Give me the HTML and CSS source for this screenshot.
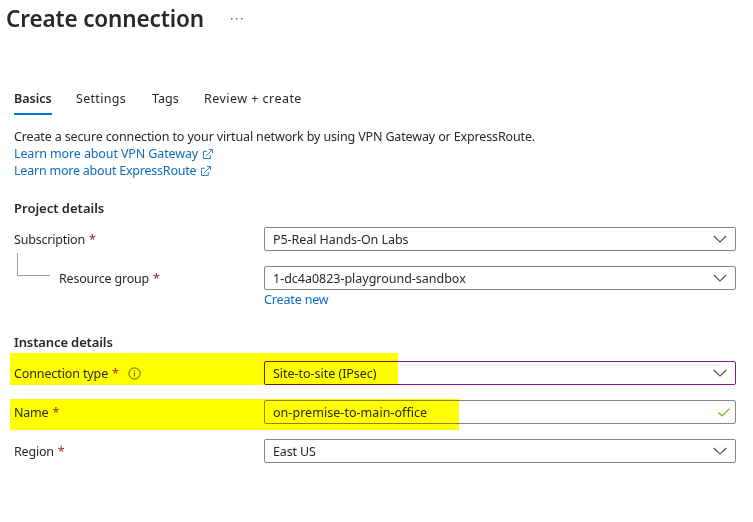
FILE: index.html
```html
<!DOCTYPE html>
<html lang="en">
<head>
<meta charset="utf-8">
<title>Create connection</title>
<link rel="stylesheet" href="styles.css">
</head>
<body>
<svg class="defs" width="0" height="0">
  <symbol id="chevron" viewBox="0 0 14 8"><path d="M0.8 1 L7 7.100 L13.200 1"/></symbol>
  <symbol id="external" viewBox="0 0 11 11"><path d="M4.500 2.500H.5v8h7.500V6.500M3.500 7.500 10 1M6.500 .5h4v4"/></symbol>
</svg>
<header class="header">
  <h1 class="title">Create connection</h1>
  <svg class="more" width="12" height="2" viewBox="0 0 12 2"><path d="M0 0h1.400v1.400H0zM5 0h1.400v1.400H5zM10 0h1.400v1.400H10z"/></svg>
</header>
<nav class="tabs">
  <a class="tab active"><span>Basics</span></a>
  <a class="tab settings">Settings</a>
  <a class="tab tags">Tags</a>
  <a class="tab review">Review + create</a>
</nav>
<main class="content">
  <div class="intro">
    <p class="desc">Create a secure connection to your virtual network by using VPN Gateway or ExpressRoute.</p>
    <a class="link"><span class="vpn">Learn more about VPN Gateway</span><svg class="ext"><use href="#external"/></svg></a>
    <a class="link"><span class="route">Learn more about ExpressRoute</span><svg class="ext"><use href="#external"/></svg></a>
  </div>
  <h2 class="section project">Project details</h2>
  <div class="row">
    <label class="label"><span class="l-sub">Subscription</span><b>*</b></label>
    <div class="field"><span class="v-sub">P5-Real Hands-On Labs</span><svg class="chev"><use href="#chevron"/></svg></div>
  </div>
  <div class="row">
    <label class="label child"><i class="branch"></i><span class="l-group">Resource group</span><b>*</b></label>
    <div class="field"><span class="v-group">1-dc4a0823-playground-sandbox</span><svg class="chev"><use href="#chevron"/></svg></div>
  </div>
  <a class="link create"><span>Create new</span></a>
  <h2 class="section instance">Instance details</h2>
  <div class="row">
    <label class="label"><span class="l-type">Connection type</span><b>*</b>
      <svg class="info" width="13" height="13" viewBox="0 0 13 13"><circle cx="6.500" cy="6.500" r="5.600"/><path d="M6.500 5.500v4M6.500 3.300v1.100"/></svg>
    </label>
    <div class="field focused"><span class="v-type">Site-to-site (IPsec)</span><svg class="chev"><use href="#chevron"/></svg></div>
    <div class="mark mark-type"></div>
  </div>
  <div class="row">
    <label class="label"><span class="l-name">Name</span><b>*</b></label>
    <div class="field"><span class="v-name">on-premise-to-main-office</span><svg class="check" width="12" height="9" viewBox="0 0 12 9"><path d="M.5 4.500 4.200 8 11.500 .7"/></svg></div>
    <div class="mark mark-name"></div>
  </div>
  <div class="row">
    <label class="label"><span class="l-region">Region</span><b>*</b></label>
    <div class="field"><span class="v-region">East US</span><svg class="chev"><use href="#chevron"/></svg></div>
  </div>
</main>
</body>
</html>
```
FILE: styles.css
```css
* { box-sizing: border-box; }
body {
  margin: 0;
  background: #fff;
  color: #292827;
  font: 12.5px/17px "Noto Sans", "Open Sans", sans-serif;
}
h1, h2, p { margin: 0; }
span { white-space: nowrap; }
.defs { position: absolute; }
.header { display: flex; align-items: center; height: 38px; padding-left: 6px; }
.title { width: 224.5px; font-size: 22.5px; line-height: 38px; font-weight: 600; letter-spacing: -.14px; white-space: nowrap; }
.more { fill: #605e5c; }
.tabs { display: flex; height: 77px; padding: 50px 0 0 14px; }
.tab { height: 27px; line-height: 21px; white-space: nowrap; }
.tab.active { width: 38px; border-bottom: 2px solid #0078d4; font-weight: 600; }
.settings { width: 50px; margin-left: 24px; letter-spacing: .3px; }
.tags { width: 28px; margin-left: 26px; }
.review { margin-left: 24px; letter-spacing: .46px; }
.content { width: 736px; padding: 13px 0 0 14px; }
.desc { letter-spacing: -.14px; white-space: nowrap; }
.link { display: flex; align-items: center; height: 17px; color: #0f6cbd; }
.vpn { letter-spacing: -.12px; }
.route { letter-spacing: -.22px; }
.ext { width: 10px; height: 10px; margin-left: 5px; fill: none; stroke: #1673cc; stroke-width: 1; }
.section { font-size: 13px; line-height: 18px; font-weight: 600; }
.project { margin: 20px 0 10px; }
.instance { margin: 25px 0 10px; letter-spacing: -.12px; }
.row { position: relative; display: grid; grid-template-columns: 250px 1fr; height: 24px; margin-bottom: 15px; }
.label { display: flex; align-items: center; letter-spacing: -.2px; }
.l-type { letter-spacing: -.12px; }
.label b { margin-left: 4px; color: #a4262c; font-weight: 400; }
.child { position: relative; padding-left: 45px; }
.branch { position: absolute; left: 3px; top: -13px; width: 33px; height: 23px; border: solid #a19f9d; border-width: 0 0 1px 1px; }
.field { display: flex; align-items: center; justify-content: space-between; padding: 0 8px; border: 1px solid #8a8886; border-radius: 2px; }
.focused { border-color: #881798; }
.v-sub { letter-spacing: -.06px; }
.v-group { letter-spacing: -.02px; }
.v-type { letter-spacing: -.03px; }
.v-name { letter-spacing: .04px; }
.v-region { letter-spacing: -.15px; }
.chev { width: 14px; height: 8px; fill: none; stroke: #484644; stroke-width: 1.1; }
.check { margin-right: -3px; fill: none; stroke: #6bb700; stroke-width: 1.2; }
.create { height: 17px; margin-top: -14px; padding-left: 250px; letter-spacing: -.15px; }
.info { margin-left: 9px; fill: none; stroke: #605e5c; stroke-width: 1; }
.mark { position: absolute; left: -4px; background: #ff0; mix-blend-mode: multiply; }
.mark-type { top: -8px; width: 388px; height: 32px; }
.mark-name { top: -1px; width: 449px; height: 31px; }
```
